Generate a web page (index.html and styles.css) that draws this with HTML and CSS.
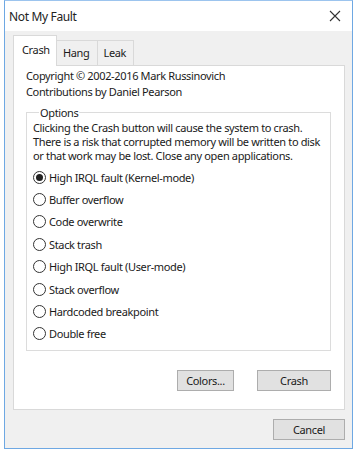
FILE: index.html
```html
<!DOCTYPE html>
<html lang="en">
<head>
    <meta charset="UTF-8">
    <title>Not My Fault</title>
    <link rel="stylesheet" href="styles.css">
</head>
<body>
    <div class="window">
        <div class="titlebar">
            <span class="title">Not My Fault</span>
            <svg class="close" width="12" height="12" viewBox="0 0 12 12">
                <path d="M1 1 L11 11 M11 1 L1 11" stroke="#333" stroke-width="1.1" fill="none"/>
            </svg>
        </div>
        <div class="client">
            <div class="tabs">
                <div class="tab active">Crash</div>
                <div class="tab">Hang</div>
                <div class="tab">Leak</div>
            </div>
            <div class="panel">
                <p class="credits">Copyright © 2002-2016 Mark Russinovich<br>Contributions by Daniel Pearson</p>

                <fieldset class="options">
                    <legend>Options</legend>
                    <p class="warning">Clicking the Crash button will cause the system to crash. There is a risk that corrupted memory will be written to disk or that work may be lost. Close any open applications.</p>
                    <label class="radio"><span class="dot checked"></span>High IRQL fault (Kernel-mode)</label>
                    <label class="radio"><span class="dot"></span>Buffer overflow</label>
                    <label class="radio"><span class="dot"></span>Code overwrite</label>
                    <label class="radio"><span class="dot"></span>Stack trash</label>
                    <label class="radio"><span class="dot"></span>High IRQL fault (User-mode)</label>
                    <label class="radio"><span class="dot"></span>Stack overflow</label>
                    <label class="radio"><span class="dot"></span>Hardcoded breakpoint</label>
                    <label class="radio"><span class="dot"></span>Double free</label>
                </fieldset>

                <div class="panel-buttons">
                    <button class="btn btn-colors">Colors...</button>
                    <button class="btn btn-crash">Crash</button>
                </div>
            </div>
            <div class="dialog-buttons">
                <button class="btn btn-cancel">Cancel</button>
            </div>
        </div>
    </div>
</body>
</html>
```

FILE: styles.css
```css
* {
    margin: 0;
    padding: 0;
    box-sizing: border-box;
}

body {
    background: #ffffff;
    font-family: 'Noto Sans', 'Open Sans', sans-serif;
    font-size: 11px;
    letter-spacing: -0.35px;
    color: #1a1a1a;
}

.window {
    margin-left: 4px;
    width: 349px;
    height: 449px;
    border: 1px solid #6ea8e3;
    border-top-color: #9cc4ee;
    background: #f0f0f0;
    display: flex;
    flex-direction: column;
}

.titlebar {
    height: 30px;
    background: #ffffff;
    display: flex;
    align-items: center;
    justify-content: space-between;
    padding: 0 11px 0 4px;
    flex-shrink: 0;
}

.title {
    font-size: 12px;
    color: #222;
}

.client {
    flex: 1;
    padding: 5px 7px 0 8px;
    display: flex;
    flex-direction: column;
}

.tabs {
    display: flex;
    align-items: flex-end;
    height: 30px;
    position: relative;
    z-index: 1;
    margin-bottom: -1px;
}

.tab {
    height: 25px;
    padding: 4px 7px 0 6px;
    border: 1px solid #d9d9d9;
    border-bottom: none;
    background: #f0f0f0;
    margin-left: -1px;
    margin-bottom: 1px;
}

.tab.active {
    height: 31px;
    margin-left: 0;
    margin-bottom: 0;
    background: #ffffff;
    padding: 6px 0 0 8px;
    width: 44px;
}

.panel {
    background: #ffffff;
    border: 1px solid #d9d9d9;
    height: 345px;
    padding: 2px 13px 0 12px;
    display: flex;
    flex-direction: column;
}

.credits {
    line-height: 16px;
}

.options {
    border: 1px solid #dcdcdc;
    margin-top: 6px;
    height: 245px;
    padding: 0 6px;
}

.options legend {
    margin-left: 6px;
    padding: 0 1px;
    line-height: 13px;
}

.warning {
    line-height: 14px;
    margin-top: 2px;
    margin-bottom: 3px;
}

.radio {
    display: flex;
    align-items: center;
    height: 22.4px;
}

.dot {
    width: 13px;
    height: 13px;
    border: 1px solid #333;
    border-radius: 50%;
    margin-right: 3px;
    position: relative;
    background: #fff;
}

.dot.checked::after {
    content: "";
    position: absolute;
    left: 2px;
    top: 2px;
    width: 7px;
    height: 7px;
    border-radius: 50%;
    background: #222;
}

.panel-buttons {
    display: flex;
    justify-content: flex-end;
    gap: 23px;
    margin-top: 19px;
}

.btn {
    font-family: 'Noto Sans', 'Open Sans', sans-serif;
    font-size: 11px;
    letter-spacing: -0.35px;
    color: #1a1a1a;
    height: 21px;
    background: #e1e1e1;
    border: 1px solid #adadad;
}

.btn-colors {
    width: 57px;
}

.btn-crash {
    width: 74px;
}

.dialog-buttons {
    display: flex;
    justify-content: flex-end;
    padding-top: 9px;
}

.btn-cancel {
    width: 72px;
}
```
